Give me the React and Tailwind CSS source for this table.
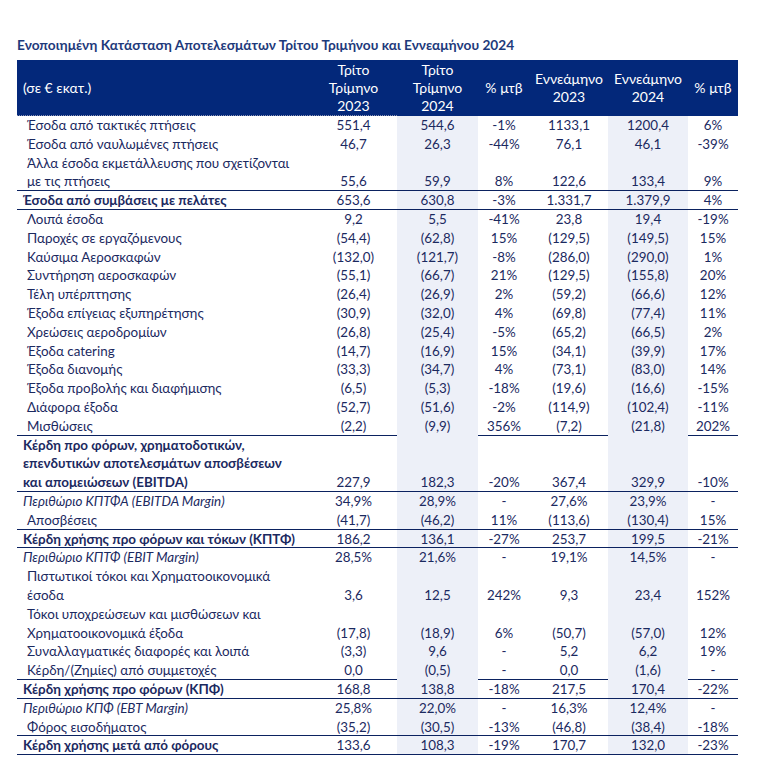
import React from 'react';

const rows = [
  { label: ['Έσοδα από τακτικές πτήσεις'], vals: ['551,4', '544,6', '-1%', '1133,1', '1200,4', '6%'] },
  { label: ['Έσοδα από ναυλωμένες πτήσεις'], vals: ['46,7', '26,3', '-44%', '76,1', '46,1', '-39%'] },
  { label: ['Άλλα έσοδα εκμετάλλευσης που σχετίζονται', 'με τις πτήσεις'], vals: ['55,6', '59,9', '8%', '122,6', '133,4', '9%'], line: 'full' },
  { label: ['Έσοδα από συμβάσεις με πελάτες'], vals: ['653,6', '630,8', '-3%', '1.331,7', '1.379,9', '4%'], kind: 'bold', line: 'full' },
  { label: ['Λοιπά έσοδα'], vals: ['9,2', '5,5', '-41%', '23,8', '19,4', '-19%'] },
  { label: ['Παροχές σε εργαζόμενους'], vals: ['(54,4)', '(62,8)', '15%', '(129,5)', '(149,5)', '15%'] },
  { label: ['Καύσιμα Αεροσκαφών'], vals: ['(132,0)', '(121,7)', '-8%', '(286,0)', '(290,0)', '1%'] },
  { label: ['Συντήρηση αεροσκαφών'], vals: ['(55,1)', '(66,7)', '21%', '(129,5)', '(155,8)', '20%'] },
  { label: ['Τέλη υπέρπτησης'], vals: ['(26,4)', '(26,9)', '2%', '(59,2)', '(66,6)', '12%'] },
  { label: ['Έξοδα επίγειας εξυπηρέτησης'], vals: ['(30,9)', '(32,0)', '4%', '(69,8)', '(77,4)', '11%'] },
  { label: ['Χρεώσεις αεροδρομίων'], vals: ['(26,8)', '(25,4)', '-5%', '(65,2)', '(66,5)', '2%'] },
  { label: ['Έξοδα catering'], vals: ['(14,7)', '(16,9)', '15%', '(34,1)', '(39,9)', '17%'] },
  { label: ['Έξοδα διανομής'], vals: ['(33,3)', '(34,7)', '4%', '(73,1)', '(83,0)', '14%'] },
  { label: ['Έξοδα προβολής και διαφήμισης'], vals: ['(6,5)', '(5,3)', '-18%', '(19,6)', '(16,6)', '-15%'] },
  { label: ['Διάφορα έξοδα'], vals: ['(52,7)', '(51,6)', '-2%', '(114,9)', '(102,4)', '-11%'] },
  { label: ['Μισθώσεις'], vals: ['(2,2)', '(9,9)', '356%', '(7,2)', '(21,8)', '202%'], line: 'gap' },
  {
    label: ['Κέρδη προ φόρων, χρηματοδοτικών,', 'επενδυτικών αποτελεσμάτων αποσβέσεων', 'και απομειώσεων (EBITDA)'],
    vals: ['227,9', '182,3', '-20%', '367,4', '329,9', '-10%'], kind: 'bold', line: 'full',
  },
  { label: ['Περιθώριο ΚΠΤΦΑ (EBITDA Margin)'], vals: ['34,9%', '28,9%', '-', '27,6%', '23,9%', '-'], kind: 'italic' },
  { label: ['Αποσβέσεις'], vals: ['(41,7)', '(46,2)', '11%', '(113,6)', '(130,4)', '15%'], line: 'full' },
  { label: ['Κέρδη χρήσης προ φόρων και τόκων (ΚΠΤΦ)'], vals: ['186,2', '136,1', '-27%', '253,7', '199,5', '-21%'], kind: 'bold', line: 'full' },
  { label: ['Περιθώριο ΚΠΤΦ (EBIT Margin)'], vals: ['28,5%', '21,6%', '-', '19,1%', '14,5%', '-'], kind: 'italic' },
  { label: ['Πιστωτικοί τόκοι και Χρηματοοικονομικά', 'έσοδα'], vals: ['3,6', '12,5', '242%', '9,3', '23,4', '152%'] },
  { label: ['Τόκοι υποχρεώσεων και μισθώσεων και', 'Χρηματοοικονομικά έξοδα'], vals: ['(17,8)', '(18,9)', '6%', '(50,7)', '(57,0)', '12%'] },
  { label: ['Συναλλαγματικές διαφορές και λοιπά'], vals: ['(3,3)', '9,6', '-', '5,2', '6,2', '19%'] },
  { label: ['Κέρδη/(Ζημίες) από συμμετοχές'], vals: ['0,0', '(0,5)', '-', '0,0', '(1,6)', '-'], line: 'gap' },
  { label: ['Κέρδη χρήσης προ φόρων (ΚΠΦ)'], vals: ['168,8', '138,8', '-18%', '217,5', '170,4', '-22%'], kind: 'bold', line: 'full' },
  { label: ['Περιθώριο ΚΠΦ (EBT Margin)'], vals: ['25,8%', '22,0%', '-', '16,3%', '12,4%', '-'], kind: 'italic' },
  { label: ['Φόρος εισοδήματος'], vals: ['(35,2)', '(30,5)', '-13%', '(46,8)', '(38,4)', '-18%'], line: 'full' },
  { label: ['Κέρδη χρήσης μετά από φόρους'], vals: ['133,6', '108,3', '-19%', '170,7', '132,0', '-23%'], kind: 'bold', line: 'full' },
];

// widths of the six number columns
const colW = ['w-[87px]', 'w-[81px]', 'w-[52px]', 'w-[78px]', 'w-[80px]', 'w-[50px]'];
const shaded = [false, true, false, false, true, false];

const LINE = 'shadow-[inset_0_-1px_0_#0b2260]';

function Row({ row }) {
  const bold = row.kind === 'bold';
  const italic = row.kind === 'italic';
  return (
    <div className="flex">
      <div
        className={`w-[293px] ${bold || italic ? 'pl-[6px]' : 'pl-[10px]'} ${bold ? 'font-bold' : ''} ${italic ? 'italic' : ''} ${row.line ? LINE : ''}`}
      >
        {row.label.map((t, i) => (
          <div key={i} className="h-[18.8px] leading-[18.8px] whitespace-nowrap">{t}</div>
        ))}
      </div>
      {row.vals.map((v, i) => {
        const line = row.line === 'full' || (row.line === 'gap' && !shaded[i]);
        return (
          <div
            key={i}
            className={`${colW[i]} flex items-end justify-center ${shaded[i] ? 'bg-[#edf0f8]' : ''} ${line ? LINE : ''}`}
          >
            <span className="h-[18.8px] leading-[18.8px]">{v}</span>
          </div>
        );
      })}
    </div>
  );
}

export default function App() {
  return (
    <div className="min-h-screen bg-white text-[13.4px] text-[#1b295f]" style={{ fontFamily: 'Lato, "Noto Sans", sans-serif' }}>
      <div className="pl-[17px] pt-[35px]">
        <h1 className="h-[25px] leading-[20px] text-[13.7px] font-bold text-[#1e3a7b]">
          Ενοποιημένη Κατάσταση Αποτελεσμάτων Τρίτου Τριμήνου και Εννεαμήνου 2024
        </h1>

        <div className="w-[721px]">
          <div className="flex h-[56px] bg-[#03287a] text-white text-[14px] leading-[18px]">
            <div className="w-[293px] pl-[6px] flex items-center border-b border-dotted border-[#8a93b5]">(σε € εκατ.)</div>
            <div className="w-[87px] flex items-center justify-center text-center border-b border-dotted border-[#8a93b5]">
              Τρίτο<br />Τρίμηνο<br />2023
            </div>
            <div className="w-[81px] flex items-center justify-center text-center">
              Τρίτο<br />Τρίμηνο<br />2024
            </div>
            <div className="w-[52px] flex items-center justify-center text-center">% μτβ</div>
            <div className="w-[78px] flex items-center justify-center text-center">
              Εννεάμηνο<br />2023
            </div>
            <div className="w-[80px] flex items-center justify-center text-center">
              Εννεάμηνο<br />2024
            </div>
            <div className="w-[50px] flex items-center justify-center text-center">% μτβ</div>
          </div>

          {rows.map((r, i) => (
            <Row key={i} row={r} />
          ))}
        </div>
      </div>
    </div>
  );
}
